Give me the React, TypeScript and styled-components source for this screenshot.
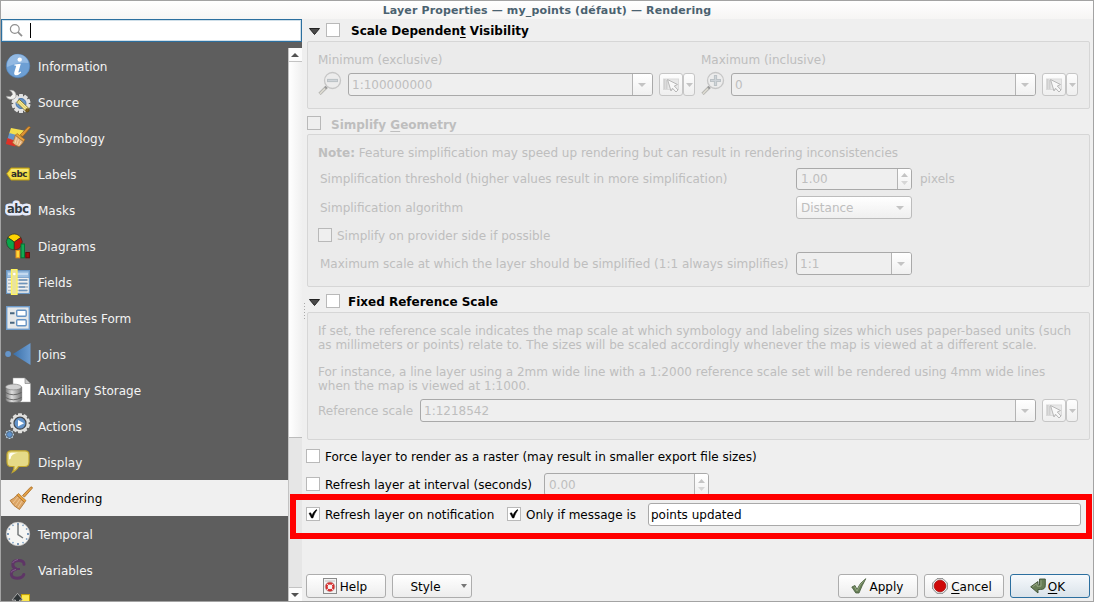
import React from "react";
import styled, { createGlobalStyle, css } from "styled-components";

const Global = createGlobalStyle`
  * { box-sizing: border-box; }
  body { margin: 0; background: #efefef; }
  u { text-decoration: underline; text-underline-offset: 2px; text-decoration-skip-ink: none; }
`;

const Window = styled.div`
  width: 1094px;
  height: 602px;
  display: flex;
  flex-direction: column;
  border: 1px solid #a3a3a3;
  background: #efefef;
  overflow: hidden;
  position: relative;
  font: 12px/14px "DejaVu Sans", sans-serif;
  color: #000;
  white-space: nowrap;
`;

const TitleBar = styled.div`
  height: 18px;
  flex: none;
  background: linear-gradient(#ffffff, #f6f5f4);
  color: #4b6270;
  font-size: 11px;
  font-weight: bold;
  letter-spacing: 0.145px;
  line-height: 19px;
  text-align: center;
`;

const Body = styled.div`
  display: flex;
  flex: 1;
  min-height: 0;
`;

const Sidebar = styled.div`
  width: 301px;
  flex: none;
  background: #5e5e5e;
  display: flex;
  flex-direction: column;
`;

const Search = styled.div`
  height: 23px;
  margin-bottom: 6px;
  flex: none;
  display: flex;
  align-items: center;
  background: #fff;
  border: 1px solid #2c6f9f;
  box-shadow: inset 0 0 0 1px #cfdfe9;
  padding-left: 7px;
`;

const Caret = styled.span`
  width: 1px;
  height: 15px;
  margin-left: 7px;
  background: #000;
`;

const ListArea = styled.div`
  display: flex;
  flex: 1;
  min-height: 0;
`;

const List = styled.div`
  flex: 1;
  overflow: hidden;
`;

const Item = styled.div<{ $selected?: boolean }>`
  height: 36px;
  display: flex;
  align-items: center;
  gap: 7px;
  padding-left: ${(p) => (p.$selected ? 7 : 4)}px;
  background: ${(p) => (p.$selected ? "#f0f0f0" : "transparent")};
  color: ${(p) => (p.$selected ? "#000" : "#f4f4f4")};
  svg { flex: none; }
  > span { padding-top: 2px; }
`;

const Scroll = styled.div`
  width: 14px;
  display: flex;
  flex-direction: column;
  background: #e6e6e6;
  border-left: 1px solid #c3c3c3;
`;

const ScrollButton = styled.div<{ $down?: boolean }>`
  height: 14px;
  flex: none;
  display: flex;
  align-items: center;
  justify-content: center;
  padding-right: 1px;
  background: #fbfbfb;
  border-${(p) => (p.$down ? "top" : "bottom")}: 1px solid #c3c3c3;
`;

const Thumb = styled.div`
  height: 376px;
  background: linear-gradient(90deg, #ffffff, #f0f0f0);
  border-bottom: 1px solid #bcbcbc;
`;

const Filler = styled.div`
  flex: 1;
`;

const Splitter = styled.div`
  width: 4px;
  padding: 284px 0 0 2px;
  svg { display: block; }
`;

const Main = styled.div`
  flex: 1;
  min-width: 0;
  display: flex;
  flex-direction: column;
  padding-right: 3px;
`;

const Header = styled.div<{ $disabled?: boolean; $h: number; $gap: number; $indent?: number; $top?: number; $drop?: number }>`
  height: ${(p) => p.$h}px;
  flex: none;
  display: flex;
  align-items: center;
  font-weight: bold;
  padding-top: ${(p) => p.$top ?? 0}px;
  padding-left: ${(p) => p.$indent ?? 1}px;
  color: ${(p) => (p.$disabled ? "#bebebe" : "#000")};
  > :last-child {
    margin-left: ${(p) => p.$gap}px;
    padding-top: ${(p) => p.$drop ?? 2}px;
  }
`;

const Arrow = styled.span`
  width: 11px;
  height: 14px;
  margin-left: 3px;
  margin-right: 6px;
  svg { display: block; margin-top: 5px; }
`;

const Group = styled.div<{ $h: number }>`
  height: ${(p) => p.$h}px;
  flex: none;
  margin-left: 1px;
  border: 1px solid #d6d6d6;
  border-radius: 2px;
  background: #ebebeb;
  color: #bebebe;
  padding: 0 11px 0 10px;
`;

const Line = styled.div<{ $h?: number; $mt?: number; $pl?: number }>`
  display: flex;
  align-items: center;
  height: ${(p) => p.$h ?? 23}px;
  margin-top: ${(p) => p.$mt ?? 0}px;
  padding-left: ${(p) => p.$pl ?? 0}px;
`;

const Cell = styled.span<{ $w: number }>`
  width: ${(p) => p.$w}px;
  flex: none;
`;

const Box = styled.span<{ $disabled?: boolean; $raise?: boolean }>`
  width: 14px;
  height: 14px;
  flex: none;
  margin-bottom: ${(p) => (p.$raise ? 1 : 0)}px;
  border: 1px solid #b9b9b9;
  background: ${(p) => (p.$disabled ? "#efefef" : "#fff")};
  svg { display: block; }
`;

const field = css`
  display: flex;
  flex: none;
  border: 1px solid #a9a9a9;
  border-radius: 3px;
  height: 23px;
  overflow: hidden;
`;

const Field = styled.div<{ $w: number; $live?: boolean; $h?: number }>`
  ${field}
  width: ${(p) => p.$w}px;
  height: ${(p) => p.$h ?? 23}px;
  background: ${(p) => (p.$live ? "#fff" : "#efefef")};
  color: ${(p) => (p.$live ? "#000" : "#bebebe")};
`;

const Value = styled.span<{ $pl?: number }>`
  flex: 1;
  align-self: center;
  padding-left: ${(p) => p.$pl ?? 3}px;
`;

const FieldButton = styled.span<{ $w: number; $plain?: boolean }>`
  width: ${(p) => p.$w}px;
  display: flex;
  flex-direction: column;
  gap: 4px;
  align-items: center;
  justify-content: center;
  padding-right: ${(p) => (p.$w > 14 ? 2 : 0)}px;
  border-left: ${(p) => (p.$plain ? "none" : "1px solid #b4b4b4")};
  background: ${(p) => (p.$plain ? "none" : "linear-gradient(#ffffff, #f0f0f0)")};
`;

const Select = styled.div`
  ${field}
  width: 116px;
  border-color: #bcbcbc;
  background: linear-gradient(#ffffff, #efefef);
`;

const ToolPair = styled.div`
  display: flex;
  margin-left: 6px;
`;

const Tool = styled.span<{ $w: number }>`
  width: ${(p) => p.$w}px;
  height: 23px;
  display: flex;
  align-items: center;
  justify-content: center;
  border: 1px solid #c6c6c6;
  border-radius: 3px;
  background: linear-gradient(#fdfdfd, #efefef);
`;

const Text = styled.span<{ $ml?: number; $drop?: boolean }>`
  margin-left: ${(p) => p.$ml ?? 5}px;
  padding-top: ${(p) => (p.$drop ? 2 : 0)}px;
`;

const Footer = styled.div`
  display: flex;
  gap: 6px;
  height: 24px;
  margin-top: 48px;
`;

const Button = styled.div<{ $primary?: boolean; $gap?: number; $pr?: number }>`
  width: 80px;
  height: 24px;
  display: flex;
  align-items: center;
  justify-content: center;
  gap: ${(p) => p.$gap ?? 3}px;
  padding-right: ${(p) => p.$pr ?? 2}px;
  border: 1px solid ${(p) => (p.$primary ? "#2c6f9f" : "#adadad")};
  border-radius: 3px;
  background: ${(p) => (p.$primary ? "linear-gradient(#f6f9fc, #dae3ea)" : "linear-gradient(#ffffff, #ededed)")};
  svg { flex: none; }
  > span { padding-top: 2px; }
`;

const Highlight = styled.div`
  position: absolute;
  left: 289px;
  top: 493px;
  width: 802px;
  height: 45px;
  border: 6px solid #ff0000;
`;

const Tri = ({ w = 8, h = 4, up, c = "#c4c4c4" }: { w?: number; h?: number; up?: boolean; c?: string }) => (
  <svg width={w} height={h} viewBox="0 0 8 4" preserveAspectRatio="none">
    <path d={up ? "M0 4L4 0L8 4Z" : "M0 0H8L4 4Z"} fill={c} />
  </svg>
);

const Expand = () => (
  <Arrow>
    <svg width="11" height="7" viewBox="0 0 11 7">
      <path d="M.5.5H10.5L5.5 6.5Z" fill="#4a4a4a" stroke="#222" strokeWidth="1" strokeLinejoin="round" />
    </svg>
  </Arrow>
);

const Check = ({ on, disabled, raise }: { on?: boolean; disabled?: boolean; raise?: boolean }) => (
  <Box $disabled={disabled} $raise={raise}>
    {on && (
      <svg width="12" height="12" viewBox="0 0 12 12">
        <path d="M2 5.2L3.7 4.8L5 7.4C6 5 7.4 2.8 9.6 1.6L10 2C8.200 4.200 7 6.800 5.900 10H4.500Z" fill="#000" stroke="#000" strokeWidth=".5" />
      </svg>
    )}
  </Box>
);

const Magnifier = ({ plus }: { plus?: boolean }) => (
  <svg width="24" height="24" viewBox="0 -.5 24 24">
    <path d="M8.500 15.500L1.500 22.500" stroke="#b5b5b2" strokeWidth="3.200" />
    <path d="M7 17L1.800 22.200" stroke="#dedcd2" strokeWidth="1.600" />
    <path d="M7 15L9 17" stroke="#9b9b9b" strokeWidth="2" />
    <circle cx="14.500" cy="9" r="8" fill="#ececec" stroke="#c6c6c6" strokeWidth="1.300" />
    <path d={plus ? "M9 9H20M14.500 3.500V14.500" : "M9 9H20"} stroke="#bcc2c6" strokeWidth="3.200" />
    <path d={plus ? "M10 9H19M14.500 4.500V13.500" : "M10 9H19"} stroke="#ced3d8" strokeWidth="1.200" />
  </svg>
);

const Tools = () => (
  <ToolPair>
    <Tool $w={24}>
      <svg width="17" height="16" viewBox="0 0 17 16">
        <rect x=".5" y="2" width="15" height="10.500" fill="#e8e8e8" stroke="#dadada" />
        <path d="M1.800 2V12M3.800 3V12" stroke="#cccccc" strokeWidth="1.300" />
        <path d="M4.500 2.500L14.500 7.500L11.300 9L15 13L13 15L9.500 11.200L8 14Z" fill="#f8f8f8" stroke="#b7b7b7" />
      </svg>
    </Tool>
    <Tool $w={12}><Tri w={7} /></Tool>
  </ToolPair>
);

const Combo = ({ w, children }: { w: number; children: React.ReactNode }) => (
  <Field $w={w}>
    <Value>{children}</Value>
    <FieldButton $w={20}><Tri /></FieldButton>
  </Field>
);

const Spin = ({ w, h, children }: { w: number; h?: number; children: React.ReactNode }) => (
  <Field $w={w} $h={h}>
    <Value $pl={4}>{children}</Value>
    <FieldButton $w={14}><Tri up w={7} /><Tri w={7} c="#d6d6d6" /></FieldButton>
  </Field>
);

const gearTeeth = (cx: number, cy: number, r: number, n: number, w: number, fill: string) =>
  Array.from({ length: n }, (_, i) => (
    <rect key={i} x={cx - w / 2} y={cy - r} width={w} height={r} rx=".6" fill={fill} transform={`rotate(${(i * 360) / n} ${cx} ${cy})`} />
  ));

const Svg = ({ children }: { children: React.ReactNode }) => (
  <svg width="26" height="26" viewBox="-1 -1 26 26">{children}</svg>
);

const Brush = () => (
  <g>
    <path d="M13.500 9.500L21.500 1.200Q23 .2 23.500 2L15.500 11Z" fill="#e2a04a" stroke="#a86a1c" strokeWidth=".8" />
    <path d="M9.500 7.500L17 14.500L15.500 16.500L7.800 9.200Z" fill="#e9a23c" stroke="#a86a1c" strokeWidth=".7" />
    <path d="M7.800 9.200L15.600 16.500L10.500 23.500Q4 20 1 14.500Q5 12.500 7.800 9.200Z" fill="#dca566" stroke="#a9702d" strokeWidth=".8" />
    <path d="M9 11L4 17M11 13L6.500 19.500M13 15L9 21.500" stroke="#f2cf9e" strokeWidth=".8" />
  </g>
);

const icons: Record<string, React.ReactNode> = {
  Information: (
    <Svg>
      <circle cx="12" cy="12" r="11.800" fill="#6d9fd4" stroke="#4f82b8" strokeWidth=".6" />
      <path d="M1.200 13A10.800 10.800 0 0 1 22.500 9Q12 7.500 1.200 13Z" fill="#93b9e2" />
      <circle cx="13.700" cy="5.600" r="2.200" fill="#fff" />
      <path d="M8.500 10.400L14.800 9.800L12.400 18Q12.200 19.300 14.800 17.600L15.200 18.400Q12 21.600 9.600 21.200Q7.600 20.700 8.400 18L10.200 12Q10.300 11.300 8.200 11.400Z" fill="#fff" />
    </Svg>
  ),
  Source: (
    <Svg>
      {gearTeeth(15, 13.5, 9.5, 10, 4, "#e2e2e2")}
      <circle cx="15" cy="13.500" r="7.600" fill="#e2e2e2" />
      <circle cx="15" cy="13.500" r="5" fill="#6592c6" stroke="#4675aa" />
      <path d="M8 7.500L13 13" stroke="#ececec" strokeWidth="3.800" />
      <path d="M3.500 .2Q8.500-.5 10 4Q10.600 9.800 4.500 9.500Q1 9 .2 6.200L4.500 6.500L6.500 4.500L5.800 2.200Z" fill="#f0f0ee" stroke="#898989" strokeWidth=".6" />
      <path d="M10.500 12L13.500 9.500L23.200 18.800Q23.500 21.500 20.500 22Z" fill="#e9d873" stroke="#72641f" strokeWidth=".8" />
      <path d="M12 12.500L20.500 20.500M14 11L22 18.800" stroke="#f9eead" strokeWidth=".8" />
      <circle cx="21.300" cy="20.300" r="1.700" fill="#7b5d20" stroke="#3c3012" strokeWidth=".5" />
    </Svg>
  ),
  Symbology: (
    <Svg>
      <path d="M5 2L18 4.500L15 11L3 8Z" fill="#f5df4e" />
      <path d="M3.300 7L14 10L12 17L1.500 13Z" fill="#6695c9" />
      <path d="M1.500 12L11 15.500L9 20.500L-.2 18Z" fill="#dc3127" />
      <path d="M14 9L22 .8Q23.500-.2 24.400 1.500L16.800 10.500Z" fill="#dc9336" stroke="#97601a" strokeWidth=".7" />
      <path d="M11 7.500L19 13.500L17.500 15.800L9.300 9.300Z" fill="#eaa23c" stroke="#9b621a" strokeWidth=".6" />
      <path d="M9.300 9.300L17.500 15.800Q16 18.500 13 20.800Q9 19.500 6.500 16.800Q8.300 13.500 9.300 9.300Z" fill="#e3b27c" stroke="#a9702d" strokeWidth=".7" />
      <path d="M10.500 11.500L9 17.500M12.500 13.500L11 18.500M15 15.500L13 19.500" stroke="#f7dcb6" strokeWidth=".8" />
    </Svg>
  ),
  Labels: (
    <Svg>
      <path d="M.7 11.800L5 6H23.300V18H5Z" fill="#f3dc45" stroke="#b69714" />
      <path d="M5.500 7H22.300V9.300H4.300Z" fill="#fbf09a" opacity=".6" />
      <text x="5" y="15" fontFamily="DejaVu Sans" fontWeight="bold" fontSize="8.800" textLength="16.500" fill="#2c2c2c">abc</text>
    </Svg>
  ),
  Masks: (
    <Svg>
      <g fontFamily="DejaVu Sans" fontWeight="bold" fontSize="11.500">
        <text x="1" y="15.300" textLength="22" stroke="#e6ebfb" strokeWidth="5" strokeLinejoin="round" fill="#e6ebfb">abc</text>
        <text x="1" y="15.300" textLength="22" fill="#333a40">abc</text>
      </g>
    </Svg>
  ),
  Diagrams: (
    <Svg>
      <g stroke="#30301e" strokeWidth=".7">
        <path d="M8.300 8L1.800 3.500A7.800 7.800 0 0 1 14.800 3.500Z" fill="#ffd400" />
        <path d="M8.300 8V15.800A7.800 7.800 0 0 1 1.800 3.500Z" fill="#09a64c" />
        <path d="M8.300 8L14.800 3.500A7.800 7.800 0 0 1 8.300 15.800Z" fill="#c0100c" />
      </g>
      <rect x="10" y="16.500" width="3.700" height="7.300" fill="#ffd83a" stroke="#e8901c" />
      <rect x="15" y="10" width="3.500" height="13.800" fill="#12aa54" stroke="#057234" />
      <rect x="19.800" y="18.500" width="3.600" height="5.300" fill="#a30d0c" stroke="#660907" />
    </Svg>
  ),
  Fields: (
    <Svg>
      <rect x=".6" y=".6" width="22.800" height="22.800" fill="#f1f1f1" stroke="#6b97c3" strokeWidth="1.200" />
      <rect x="1" y="1" width="22" height="6.500" fill="#9ec0e2" stroke="#6b97c3" strokeWidth=".7" />
      <path d="M2 4H22" stroke="#c4daf0" strokeWidth="2" />
      <path d="M2 10H22M2 13.500H22M2 17H22M2 20.500H22" stroke="#aab6c0" strokeWidth="1.300" />
      <path d="M13 10H21M13 13.500H21M13 17H19M13 20.500H21" stroke="#6d94bb" strokeWidth="1.300" />
      <rect x="5.500" y="-.5" width="5.500" height="25" fill="#e9e3a0" stroke="#fff45c" strokeWidth="1.300" />
      <circle cx="8.300" cy="4" r="1.300" fill="#fff" />
    </Svg>
  ),
  "Attributes Form": (
    <Svg>
      <rect x=".7" y=".7" width="22.600" height="22.600" fill="#e6e8e9" stroke="#6e9bca" strokeWidth="1.400" />
      <path d="M4 7.300H8.500M4 16.700H8.500" stroke="#47657f" strokeWidth="2" />
      <rect x="10.700" y="4.200" width="9.500" height="6" rx="1" fill="#fff" stroke="#6593c4" strokeWidth="1.400" />
      <rect x="10.700" y="13.700" width="9.500" height="6" rx="1" fill="#fff" stroke="#6593c4" strokeWidth="1.400" />
    </Svg>
  ),
  Joins: (
    <Svg>
      <defs>
        <linearGradient id="join" x1="0" x2="1"><stop stopColor="#3a6fa8" /><stop offset="1" stopColor="#6a9bd0" /></linearGradient>
      </defs>
      <circle cx="2.100" cy="12" r="2.900" fill="#6595ca" />
      <path d="M7 12L24.500 1V23Z" fill="url(#join)" />
    </Svg>
  ),
  "Auxiliary Storage": (
    <Svg>
      <defs>
        <linearGradient id="cyl" x1="0" x2="1"><stop stopColor="#777" /><stop offset=".4" stopColor="#dedede" /><stop offset="1" stopColor="#747474" /></linearGradient>
      </defs>
      <path d="M7 0H19L24.500 5.500V24H7Z" fill="#fff" stroke="#9a9a9a" strokeWidth=".5" />
      <path d="M19 0V5.500H24.500Z" fill="#c9c9c9" stroke="#777" strokeWidth=".6" />
      <path d="M-.6 9V21.500Q-.6 24.600 7.500 24.600T15.700 21.500V9Z" fill="url(#cyl)" stroke="#606060" strokeWidth=".6" />
      <ellipse cx="7.500" cy="9" rx="8" ry="2.900" fill="#d2d2d2" stroke="#777" strokeWidth=".6" />
      <path d="M-.5 14.500Q7 19 15.500 14.500M-.5 19.500Q7 24 15.500 19.500" fill="none" stroke="#555" strokeWidth=".8" />
    </Svg>
  ),
  Actions: (
    <Svg>
      {gearTeeth(14, 9.2, 10, 10, 4, "#e0e0de")}
      <circle cx="14" cy="9.200" r="8.600" fill="#e0e0de" />
      <circle cx="14" cy="9.200" r="6" fill="#6394cb" stroke="#44494f" strokeWidth="1.200" />
      <path d="M12 5.900L18 9.200L12 12.500Z" fill="#fff" />
      {gearTeeth(3.5, 20.5, 4.5, 8, 2, "#b3ccdf")}
      <circle cx="3.500" cy="20.500" r="2.900" fill="#5e92cc" stroke="#47576a" strokeWidth=".7" />
    </Svg>
  ),
  Display: (
    <Svg>
      <path d="M5 .8H19Q23 .8 23 4.800V12Q23 16.500 19 16.500H12.500Q11 20 6.500 22.300Q8.500 19 8 16.500H5Q1 16.500 1 12V4.800Q1 .8 5 .8Z" fill="#e5da87" stroke="#c2a72e" strokeWidth="1.200" />
      <path d="M3 9.500V5Q3 2.800 5.500 2.800H12Q5 3.500 4.500 9Z" fill="#fffef0" />
    </Svg>
  ),
  Rendering: <Svg><Brush /></Svg>,
  Temporal: (
    <Svg>
      <circle cx="12" cy="12" r="11.700" fill="#f6f6f4" stroke="#c8c8c8" strokeWidth=".7" />
      {Array.from({ length: 12 }, (_, i) => (
        <circle key={i} cx="12" cy="2" r=".9" fill={i % 3 ? "#7fa2c5" : "#456f9b"} transform={`rotate(${i * 30} 12 12)`} />
      ))}
      <path d="M12 2.500V12.500L17 16" fill="none" stroke="#777b7b" strokeWidth="1.500" />
    </Svg>
  ),
  Variables: (
    <Svg>
      <path d="M18 6.300Q18.200 2.500 12.500 2.500Q7 2.500 6.800 6.500Q6.800 10 10.500 11Q5.300 12.200 5.300 16Q5.500 20.200 11 20.200Q16.500 20.200 17.800 16.500" fill="none" stroke="#5e3566" strokeWidth="3" strokeLinecap="round" />
      <path d="M10.500 11H14" stroke="#5e3566" strokeWidth="2" />
      <path d="M6.500 5Q8 2 12 1.500M4.800 14.500Q6.500 12 10 11.500" fill="none" stroke="#8f6a98" strokeWidth=".8" />
    </Svg>
  ),
  more: (
    <Svg>
      <rect x="15.500" y=".6" width="8" height="12" fill="#fce94f" stroke="#c4a000" />
      <path d="M6 6L11.500-.6L17 6H13.500V14H9.500V6Z" fill="#2e3436" stroke="#c8c8c8" strokeWidth=".7" />
    </Svg>
  ),
};

const entries = ["Information", "Source", "Symbology", "Labels", "Masks", "Diagrams", "Fields", "Attributes Form", "Joins", "Auxiliary Storage", "Actions", "Display", "Rendering", "Temporal", "Variables"];

export default function App() {
  return (
    <>
      <Global />
      <Window>
        <TitleBar>Layer Properties — my_points (défaut) — Rendering</TitleBar>
        <Body>
          <Sidebar>
            <Search>
              <svg width="14" height="14" viewBox="0 0 14 14" fill="none" stroke="#909090">
                <circle cx="5.800" cy="5" r="4.400" strokeWidth="1.200" />
                <path d="M9 8.200L13 12.200" strokeWidth="1.700" />
              </svg>
              <Caret />
            </Search>
            <ListArea>
              <List>
                {entries.map((name) => (
                  <Item key={name} $selected={name === "Rendering"}>
                    {icons[name]}
                    <span>{name}</span>
                  </Item>
                ))}
                <Item>{icons.more}</Item>
              </List>
              <Scroll>
                <ScrollButton><Tri up c="#505050" /></ScrollButton>
                <Thumb />
                <Filler />
                <ScrollButton $down><Tri c="#505050" /></ScrollButton>
              </Scroll>
            </ListArea>
          </Sidebar>
          <Splitter>
            <svg width="1" height="16" viewBox="0 0 1 16">
              <path d="M.5 0V16" stroke="#aaa" strokeDasharray="1 2" />
            </svg>
          </Splitter>
          <Main>
            <Header $h={22} $gap={11} $indent={0}>
              <Expand />
              <Check />
              <span>Scale Dependen<u>t</u> Visibility</span>
            </Header>
            <Group $h={68}>
              <Line $h={14} $mt={11}>
                <Cell $w={383}>Minimum (exclusive)</Cell>
                <span>Maximum (inclusive)</span>
              </Line>
              <Line $mt={6}>
                <Cell $w={30}><Magnifier /></Cell>
                <Combo w={305}>1:100000000</Combo>
                <Tools />
                <Text $ml={6} />
                <Cell $w={30}><Magnifier plus /></Cell>
                <Combo w={305}>0</Combo>
                <Tools />
              </Line>
            </Group>
            <Header $disabled $h={25} $gap={10} $top={3} $drop={3}>
              <Check disabled />
              <span>Simplify <u>G</u>eometry</span>
            </Header>
            <Group $h={153}>
              <Line $h={14} $mt={11}><span><b>Note:</b> Feature simplification may speed up rendering but can result in rendering inconsistencies</span></Line>
              <Line $mt={7} $pl={2}>
                <Cell $w={476}>Simplification threshold (higher values result in more simplification)</Cell>
                <Spin w={116} h={22}>1.00</Spin>
                <Text $ml={8}>pixels</Text>
              </Line>
              <Line $mt={6} $pl={2}>
                <Cell $w={476}>Simplification algorithm</Cell>
                <Select>
                  <Value $pl={4}>Distance</Value>
                  <FieldButton $w={21} $plain><Tri /></FieldButton>
                </Select>
              </Line>
              <Line $h={14} $mt={9}>
                <Check disabled />
                <Text $drop>Simplify on provider side if possible</Text>
              </Line>
              <Line $mt={10} $pl={2}>
                <Cell $w={476}>Maximum scale at which the layer should be simplified (1:1 always simplifies)</Cell>
                <Combo w={116}>1:1</Combo>
              </Line>
            </Group>
            <Header $h={25} $gap={8} $indent={0} $top={3} $drop={1}>
              <Expand />
              <Check />
              <span>Fixed Reference Scale</span>
            </Header>
            <Group $h={128}>
              <Line $h={14} $mt={11}>If set, the reference scale indicates the map scale at which symbology and labeling sizes which uses paper-based units (such</Line>
              <Line $h={14}>as millimeters or points) relate to. The sizes will be scaled accordingly whenever the map is viewed at a different scale.</Line>
              <Line $h={14} $mt={13}>For instance, a line layer using a 2mm wide line with a 1:2000 reference scale set will be rendered using 4mm wide lines</Line>
              <Line $h={14}>when the map is viewed at 1:1000.</Line>
              <Line $mt={6}>
                <Cell $w={102}>Reference scale</Cell>
                <Combo w={616}>1:1218542</Combo>
                <Tools />
              </Line>
            </Group>
            <Line $h={14} $mt={9}>
              <Check />
              <Text $drop>Force layer to render as a raster (may result in smaller export file sizes)</Text>
            </Line>
            <Line $mt={10}>
              <Check raise />
              <Text>Refresh layer at interval (seconds)</Text>
              <Filler />
              <Spin w={165}>0.00</Spin>
              <Cell $w={381} />
            </Line>
            <Line $mt={7}>
              <Check on raise />
              <Cell $w={187}><Text>Refresh layer on notification</Text></Cell>
              <Check on raise />
              <Cell $w={127}><Text>Only if message is</Text></Cell>
              <Field $w={433} $live><Value $pl={2}>points updated</Value></Field>
            </Line>
            <Footer>
              <Button>
                <svg width="14" height="16" viewBox="0 0 14 16">
                  <rect x=".5" y=".5" width="13" height="15" fill="#f3f3f3" stroke="#8b8b8b" />
                  <path d="M2 3H12" stroke="#c3c3c3" />
                  <circle cx="7" cy="8.800" r="3.500" fill="none" stroke="#d62d2d" strokeWidth="2.200" />
                  <path d="M3.800 5.600L5.700 7.500M10.200 5.600L8.300 7.500M3.800 12L5.700 10.100M10.200 12L8.300 10.100" stroke="#fff" strokeWidth="1" />
                  <circle cx="7" cy="8.800" r="4.800" fill="none" stroke="#a66" strokeWidth=".5" />
                </svg>
                <span>Help</span>
              </Button>
              <Button>
                <Cell $w={12} />
                <Text $ml={0}>Style</Text>
                <Cell $w={14} />
                <Tri w={6} h={4} c="#777" />
              </Button>
              <Filler />
              <Button>
                <svg width="16" height="16" viewBox="0 0 16 16">
                  <path d="M.8 9L4 7.500L6 11.500Q8.800 4.500 14.800.7Q11 7.500 8 15H4.800Z" fill="#698058" stroke="#465c3c" strokeWidth=".8" />
                  <path d="M3.500 8.700L6 13Q9 6 13 2.500" fill="none" stroke="#9eb38c" strokeWidth=".8" />
                </svg>
                <span>Apply</span>
              </Button>
              <Button $pr={4}>
                <svg width="16" height="16" viewBox="0 0 16 16">
                  <path d="M5 .7H11L15.300 5V11L11 15.300H5L.7 11V5Z" fill="#ededed" stroke="#777" strokeWidth=".9" />
                  <circle cx="8" cy="8" r="5.800" fill="#cf0808" stroke="#a00000" strokeWidth=".7" />
                </svg>
                <span><u>C</u>ancel</span>
              </Button>
              <Button $primary $pr={5} $gap={2}>
                <svg width="16" height="16" viewBox="0 0 16 16">
                  <path d="M9.500 1H15.300V7.500Q15.300 11.500 10.500 11.500H8V15L.7 8.800L8 3.500V7H9.500Z" fill="#677d56" stroke="#3f5236" strokeWidth=".9" />
                  <path d="M2.500 8.700L7 5.500V8.200H11V2.200" fill="none" stroke="#9eaf8e" strokeWidth=".8" />
                </svg>
                <span><u>O</u>K</span>
              </Button>
            </Footer>
          </Main>
        </Body>
        <Highlight />
      </Window>
    </>
  );
}
